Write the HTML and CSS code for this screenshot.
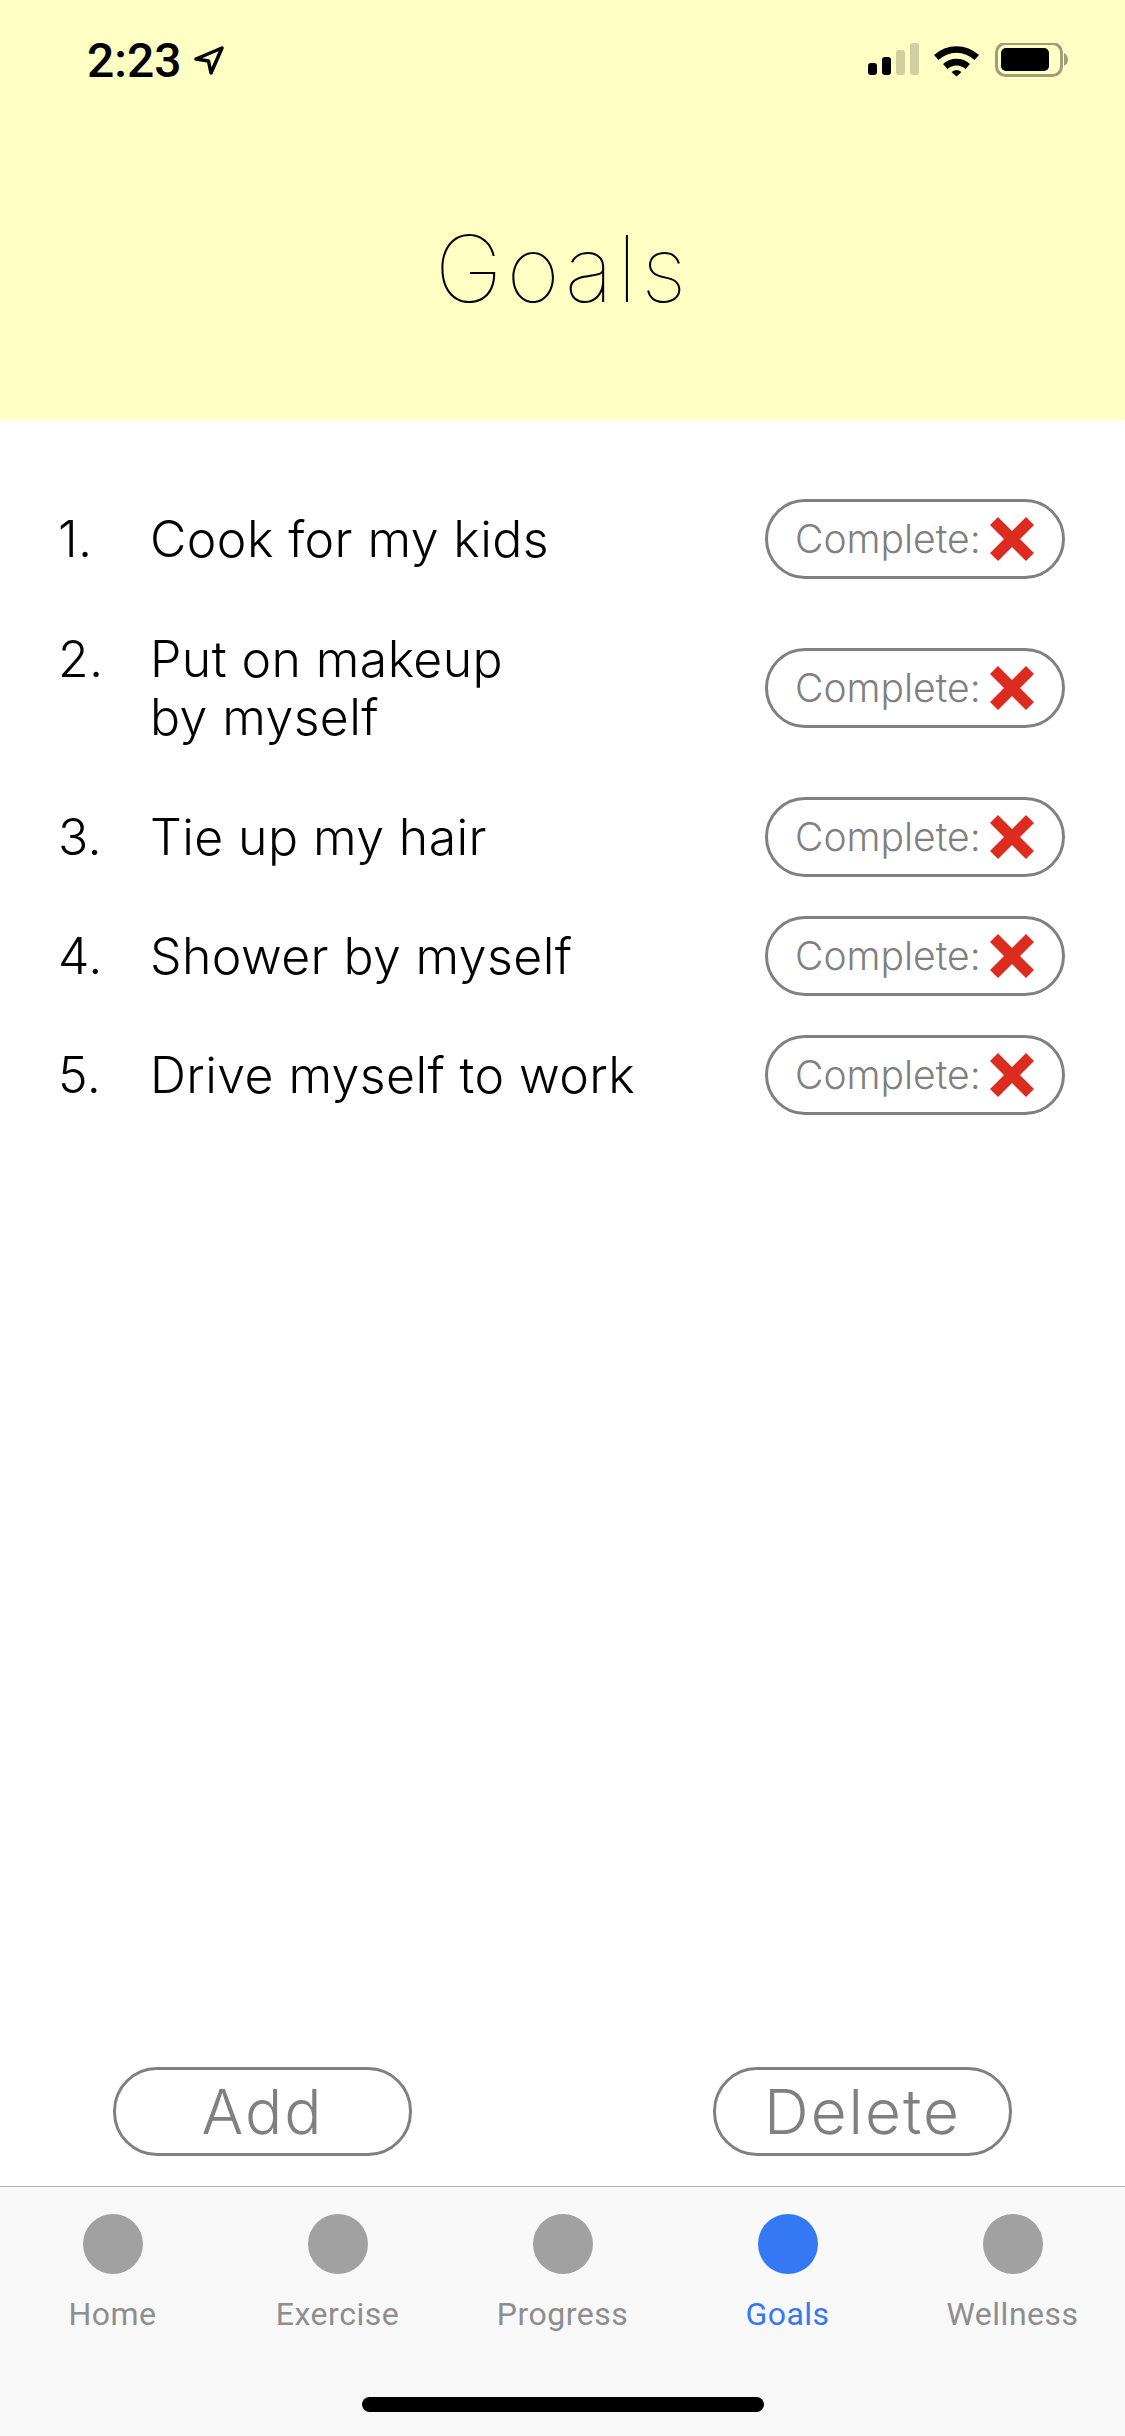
FILE: index.html
```html
<!DOCTYPE html>
<html lang="en">
<head>
    <meta charset="UTF-8">
    <meta name="viewport" content="width=device-width, initial-scale=1.0">
    <title>Goals</title>
    <link rel="stylesheet" href="styles.css">
</head>
<body>
    <div class="screen">
        <header class="top">
            <div class="status-bar">
                <div class="clock">
                    <span>2:23</span>
                    <svg class="location" width="30" height="29" viewBox="0 0 30 29">
                        <path d="M2 13 L28 2 L17 27 L14.500 15 Z" fill="none" stroke="#000" stroke-width="3.500" stroke-linejoin="round"/>
                    </svg>
                </div>
                <svg class="status-icons" width="200" height="34" viewBox="0 0 200 34">
                    <rect x="0" y="20" width="9" height="12" rx="3" fill="#000"/>
                    <rect x="14" y="14" width="9" height="18" rx="3" fill="#000"/>
                    <rect x="28" y="7" width="9" height="25" rx="3" fill="#cfcfa0"/>
                    <rect x="42" y="0" width="9" height="32" rx="3" fill="#cfcfa0"/>
                    <path d="M66 12 A33 33 0 0 1 111 12 L106.500 17 A26 26 0 0 0 70.500 17 Z" fill="#000"/>
                    <path d="M75 21 A20 20 0 0 1 102 21 L97.500 26 A13 13 0 0 0 79.500 26 Z" fill="#000"/>
                    <path d="M83.500 29 A8 8 0 0 1 93.500 29 L88.500 33.500 Z" fill="#000"/>
                    <rect x="128.500" y="0.500" width="65" height="32" rx="9" fill="none" stroke="#9e9e78" stroke-width="3"/>
                    <rect x="133" y="5" width="48" height="23" rx="5" fill="#000"/>
                    <path d="M196 10 Q200 12 200 16.500 Q200 21 196 23 Z" fill="#9e9e78"/>
                </svg>
            </div>
            <h1 class="title">Goals</h1>
        </header>

        <main class="goals">
            <div class="goal">
                <div class="goal-main">
                    <span class="goal-num">1.</span>
                    <span class="goal-text">Cook for my kids</span>
                </div>
                <div class="complete">Complete:
                    <svg width="44" height="44" viewBox="0 0 44 44"><path d="M8 0 L22 14 L36 0 L44 8 L30 22 L44 36 L36 44 L22 30 L8 44 L0 36 L14 22 L0 8 Z" fill="#db2c1f"/></svg>
                </div>
            </div>
            <div class="goal goal-tall">
                <div class="goal-main">
                    <span class="goal-num">2.</span>
                    <span class="goal-text">Put on makeup<br>by myself</span>
                </div>
                <div class="complete">Complete:
                    <svg width="44" height="44" viewBox="0 0 44 44"><path d="M8 0 L22 14 L36 0 L44 8 L30 22 L44 36 L36 44 L22 30 L8 44 L0 36 L14 22 L0 8 Z" fill="#db2c1f"/></svg>
                </div>
            </div>
            <div class="goal">
                <div class="goal-main">
                    <span class="goal-num">3.</span>
                    <span class="goal-text">Tie up my hair</span>
                </div>
                <div class="complete">Complete:
                    <svg width="44" height="44" viewBox="0 0 44 44"><path d="M8 0 L22 14 L36 0 L44 8 L30 22 L44 36 L36 44 L22 30 L8 44 L0 36 L14 22 L0 8 Z" fill="#db2c1f"/></svg>
                </div>
            </div>
            <div class="goal">
                <div class="goal-main">
                    <span class="goal-num">4.</span>
                    <span class="goal-text">Shower by myself</span>
                </div>
                <div class="complete">Complete:
                    <svg width="44" height="44" viewBox="0 0 44 44"><path d="M8 0 L22 14 L36 0 L44 8 L30 22 L44 36 L36 44 L22 30 L8 44 L0 36 L14 22 L0 8 Z" fill="#db2c1f"/></svg>
                </div>
            </div>
            <div class="goal">
                <div class="goal-main">
                    <span class="goal-num">5.</span>
                    <span class="goal-text">Drive myself to work</span>
                </div>
                <div class="complete">Complete:
                    <svg width="44" height="44" viewBox="0 0 44 44"><path d="M8 0 L22 14 L36 0 L44 8 L30 22 L44 36 L36 44 L22 30 L8 44 L0 36 L14 22 L0 8 Z" fill="#db2c1f"/></svg>
                </div>
            </div>
        </main>

        <div class="actions">
            <button type="button" class="action">Add</button>
            <button type="button" class="action">Delete</button>
        </div>

        <nav class="tabs">
            <div class="tab"><span class="tab-dot"></span>Home</div>
            <div class="tab"><span class="tab-dot"></span>Exercise</div>
            <div class="tab"><span class="tab-dot"></span>Progress</div>
            <div class="tab active"><span class="tab-dot"></span>Goals</div>
            <div class="tab"><span class="tab-dot"></span>Wellness</div>
        </nav>
        <div class="home-bar"><span class="home-indicator"></span></div>
    </div>
</body>
</html>
```

FILE: styles.css
```css
body {
    margin: 0;
    background-color: #fff;
    color: #000;
    font-family: Inter, "Liberation Sans", sans-serif;
}

.screen {
    display: flex;
    flex-direction: column;
    height: 2436px;
    overflow: hidden;
}

.top {
    height: 420px;
    background-color: #ffffc4;
}

.status-bar {
    display: flex;
    justify-content: space-between;
    align-items: flex-start;
    padding: 43px 57px 0 87px;
}

.clock {
    display: flex;
    align-items: center;
    gap: 12px;
    height: 34px;
    font-family: Roboto, sans-serif;
    font-size: 48px;
    font-weight: 500;
}

.title {
    margin: 139px 0 0;
    font-size: 92px;
    font-weight: 100;
    line-height: 106px;
    letter-spacing: 4px;
    text-align: center;
}

.goals {
    flex: 1;
    display: flex;
    flex-direction: column;
    gap: 39px;
    padding: 79px 60px 0 58px;
}

.goal {
    display: flex;
    align-items: center;
    min-height: 80px;
    font-size: 50px;
    font-weight: 300;
    line-height: 58px;
    letter-spacing: 0.4px;
}

.goal-tall {
    min-height: 140px;
}

.goal-main {
    flex: 1;
    display: flex;
    align-items: baseline;
}

.goal-num {
    width: 92px;
}

.complete {
    display: flex;
    align-items: center;
    justify-content: space-between;
    box-sizing: border-box;
    width: 300px;
    height: 80px;
    padding: 0 28px 0 27px;
    border: 3px solid #808080;
    border-radius: 40px;
    color: #808080;
    font-size: 39px;
    font-weight: 300;
    letter-spacing: 0;
}

.actions {
    display: flex;
    justify-content: space-between;
    padding: 0 113px 30px;
}

.action {
    box-sizing: border-box;
    width: 299px;
    height: 89px;
    padding: 0;
    border: 3px solid #808080;
    border-radius: 44px;
    background-color: #fff;
    color: #808080;
    font-family: inherit;
    font-size: 62px;
    font-weight: 300;
    letter-spacing: 2px;
}

.tabs {
    display: grid;
    grid-template-columns: repeat(5, 225px);
    padding-top: 27px;
    border-top: 1px solid #b0b0b0;
    background-color: #f8f8f8;
}

.tab {
    display: flex;
    flex-direction: column;
    align-items: center;
    gap: 22px;
    color: #8e8e8e;
    font-family: Roboto, sans-serif;
    font-size: 32px;
    line-height: 36px;
    letter-spacing: 0.5px;
}

.tab-dot {
    width: 60px;
    height: 60px;
    border-radius: 50%;
    background-color: #a1a1a1;
}

.active {
    color: #3478f6;
}

.active .tab-dot {
    background-color: #3478f6;
}

.home-bar {
    display: flex;
    justify-content: center;
    height: 104px;
    padding-top: 65px;
    box-sizing: border-box;
    background-color: #f8f8f8;
}

.home-indicator {
    width: 402px;
    height: 15px;
    border-radius: 8px;
    background-color: #000;
}
```
